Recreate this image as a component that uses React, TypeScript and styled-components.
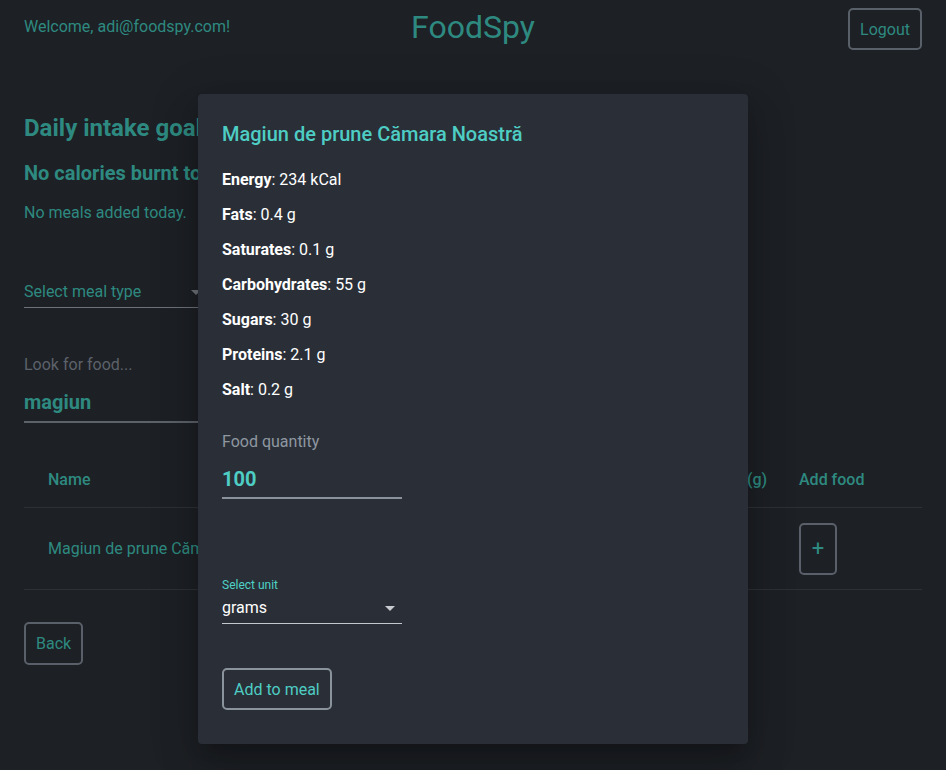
import React from "react";
import styled, { createGlobalStyle } from "styled-components";

const GlobalStyle = createGlobalStyle`
  html, body { margin: 0; padding: 0; }
  body {
    background: #1d2025;
    font-family: Roboto, "Noto Sans", "Liberation Sans", sans-serif;
    -webkit-font-smoothing: antialiased;
  }
  * { box-sizing: border-box; }
`;

const DIM = "#2e8a80";
const BRIGHT = "#4ecdc4";

const Page = styled.div`
  min-height: 770px;
  padding: 0 24px;
  color: ${DIM};
`;

const Header = styled.header`
  display: grid;
  grid-template-columns: 1fr auto 1fr;
  align-items: start;
  height: 58px;
  padding-top: 8px;
`;

const Welcome = styled.div`
  font-size: 16px;
  line-height: 24px;
  margin-top: 7px;
`;

const Brand = styled.div`
  font-size: 32px;
  line-height: 38px;
  text-align: center;
`;

const OutlineButton = styled.button<{ $tone?: "dim" | "bright" }>`
  font-family: inherit;
  font-size: 16px;
  line-height: 20px;
  background: transparent;
  color: ${(p) => (p.$tone === "bright" ? BRIGHT : DIM)};
  border: 2px solid ${(p) => (p.$tone === "bright" ? "#8a929c" : "#5a6069")};
  border-radius: 5px;
  padding: 1px 10px 0;
  height: 42px;
  cursor: pointer;
`;

const HeaderRight = styled.div`
  display: flex;
  justify-content: flex-end;
`;

const Title = styled.h2`
  margin: 54px 0 0;
  font-size: 24px;
  line-height: 32px;
  font-weight: 700;
  white-space: nowrap;
`;

const Sub = styled.h3`
  margin: 15px 0 0;
  font-size: 20px;
  line-height: 28px;
  font-weight: 700;
  white-space: nowrap;
`;

const Note = styled.p`
  margin: 14px 0 0;
  font-size: 16px;
  line-height: 24px;
`;

const SelectBox = styled.div<{ $width: number; $line: string }>`
  position: relative;
  width: ${(p) => p.$width}px;
  font-size: 16px;
  line-height: 24px;
  padding-bottom: 3px;
  border-bottom: 1px solid ${(p) => p.$line};
`;

const Arrow = styled.svg`
  position: absolute;
  right: 0;
  top: 0;
  width: 24px;
  height: 24px;
`;

const MealSelect = styled(SelectBox)`
  margin-top: 55px;
`;

const SearchField = styled.div`
  margin-top: 45px;
  width: 320px;
`;

const FieldLabel = styled.div<{ $color: string }>`
  font-size: 16px;
  line-height: 24px;
  color: ${(p) => p.$color};
`;

const FieldValue = styled.div<{ $color: string; $line: string; $pad: number }>`
  margin-top: 13px;
  font-size: 20px;
  line-height: 24px;
  font-weight: 700;
  color: ${(p) => p.$color};
  padding-bottom: ${(p) => p.$pad}px;
  border-bottom: 2px solid ${(p) => p.$line};
`;

const Table = styled.div`
  margin-top: 28px;
`;

const Row = styled.div<{ $height: number }>`
  display: grid;
  grid-template-columns: 1fr 116px 147px;
  align-items: center;
  height: ${(p) => p.$height}px;
  padding-top: 1px;
  border-bottom: 1px solid #2d3137;
`;

const Cell = styled.div<{ $head?: boolean }>`
  padding: 0 24px;
  font-size: 16px;
  line-height: 24px;
  font-weight: ${(p) => (p.$head ? 500 : 400)};
  white-space: nowrap;
  overflow: hidden;
`;

const PlusButton = styled.button`
  width: 38px;
  height: 52px;
  background: transparent;
  border: 2px solid #5a6069;
  border-radius: 5px;
  color: ${DIM};
  font-family: inherit;
  font-size: 22px;
  line-height: 22px;
  padding: 0;
  display: flex;
  align-items: center;
  justify-content: center;
`;

const BackRow = styled.div`
  margin-top: 32px;
`;

const BackButton = styled(OutlineButton)`
  height: 43px;
  padding: 0 10px;
`;

const Modal = styled.div`
  position: absolute;
  top: 94px;
  left: 50%;
  transform: translateX(-50%);
  width: 550px;
  height: 650px;
  background: #2a2f37;
  border-radius: 4px;
  box-shadow: 0 11px 15px -7px rgba(0, 0, 0, 0.2), 0 24px 38px 3px rgba(0, 0, 0, 0.14),
    0 9px 46px 8px rgba(0, 0, 0, 0.12);
  padding: 28px 24px 0;
  display: flex;
  flex-direction: column;
  align-items: flex-start;
`;

const ModalTitle = styled.h4`
  margin: 0;
  font-size: 20px;
  line-height: 24px;
  font-weight: 500;
  color: ${BRIGHT};
`;

const Nutrients = styled.div`
  margin-top: 22px;
  display: flex;
  flex-direction: column;
  gap: 11px;
`;

const Nutrient = styled.div`
  font-size: 16px;
  line-height: 24px;
  color: #ffffff;
  b { font-weight: 700; }
`;

const QtyField = styled.div`
  margin-top: 28px;
  width: 180px;
`;

const UnitField = styled.div`
  margin-top: 78px;
  width: 180px;
`;

const SmallLabel = styled.div`
  font-size: 12px;
  line-height: 16px;
  color: #4fd1c5;
`;

const UnitSelect = styled(SelectBox)`
  margin-top: 3px;
  color: #ffffff;
`;

const AddMeal = styled(OutlineButton)`
  margin-top: 44px;
`;

const ArrowIcon = ({ color }: { color: string }) => (
  <Arrow viewBox="0 0 24 24">
    <path d="M7 10l5 5 5-5z" fill={color} />
  </Arrow>
);

const nutrients: [string, string][] = [
  ["Energy", "234 kCal"],
  ["Fats", "0.4 g"],
  ["Saturates", "0.1 g"],
  ["Carbohydrates", "55 g"],
  ["Sugars", "30 g"],
  ["Proteins", "2.1 g"],
  ["Salt", "0.2 g"],
];

export default function App() {
  return (
    <>
      <GlobalStyle />
      <Page>
        <Header>
          <Welcome>Welcome, adi@foodspy.com!</Welcome>
          <Brand>FoodSpy</Brand>
          <HeaderRight>
            <OutlineButton>Logout</OutlineButton>
          </HeaderRight>
        </Header>
        <Title>Daily intake goal: 2000 kCal</Title>
        <Sub>No calories burnt today</Sub>
        <Note>No meals added today.</Note>
        <MealSelect $width={184} $line="#6d727a">
          Select meal type
          <ArrowIcon color="#6d727a" />
        </MealSelect>
        <SearchField>
          <FieldLabel $color="#5c626a">Look for food...</FieldLabel>
          <FieldValue $color={DIM} $line="#5c626a" $pad={7}>
            magiun
          </FieldValue>
        </SearchField>
        <Table>
          <Row $height={57}>
            <Cell $head>Name</Cell>
            <Cell $head>Quantity (g)</Cell>
            <Cell $head>Add food</Cell>
          </Row>
          <Row $height={82}>
            <Cell>Magiun de prune Cămara Noastră</Cell>
            <Cell>100</Cell>
            <Cell>
              <PlusButton>+</PlusButton>
            </Cell>
          </Row>
        </Table>
        <BackRow>
          <BackButton>Back</BackButton>
        </BackRow>
      </Page>
      <Modal>
        <ModalTitle>Magiun de prune Cămara Noastră</ModalTitle>
        <Nutrients>
          {nutrients.map(([k, v]) => (
            <Nutrient key={k}>
              <b>{k}</b>: {v}
            </Nutrient>
          ))}
        </Nutrients>
        <QtyField>
          <FieldLabel $color="#8f97a1">Food quantity</FieldLabel>
          <FieldValue $color={BRIGHT} $line="#8a929c" $pad={6}>
            100
          </FieldValue>
        </QtyField>
        <UnitField>
          <SmallLabel>Select unit</SmallLabel>
          <UnitSelect $width={180} $line="#c4c8cd">
            grams
            <ArrowIcon color="#c8ccd0" />
          </UnitSelect>
        </UnitField>
        <AddMeal $tone="bright">Add to meal</AddMeal>
      </Modal>
    </>
  );
}
